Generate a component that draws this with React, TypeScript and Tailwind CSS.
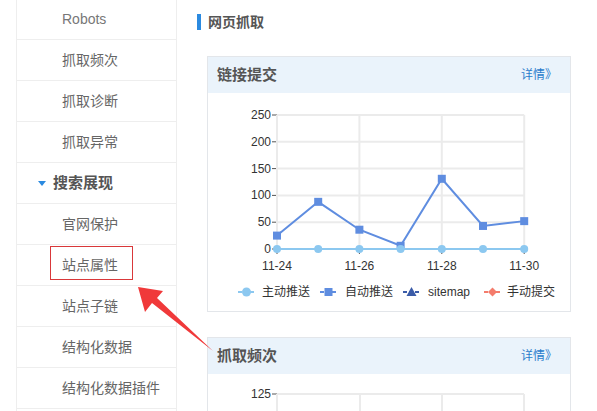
import React from 'react';

const font = { fontFamily: '"Liberation Sans", "Noto Sans CJK SC", sans-serif' };

interface NavItem {
    label: string;
    bold?: boolean;
    marked?: boolean;
}

const navItems: NavItem[] = [
    { label: 'Robots' },
    { label: '抓取频次' },
    { label: '抓取诊断' },
    { label: '抓取异常' },
    { label: '搜索展现', bold: true },
    { label: '官网保护' },
    { label: '站点属性', marked: true },
    { label: '站点子链' },
    { label: '结构化数据' },
    { label: '结构化数据插件' },
];

const submitData = [25, 88, 36, 6, 131, 43, 52];

// plot geometry in the card-body svg
const X0 = 69;
const XSTEP = 41.2;
const Y0 = 156;
const YTOP = 22;
const yOf = (v: number) => Y0 - ((Y0 - YTOP) * v) / 250;

const SubmitChart: React.FC = () => {
    const pts = submitData.map((v, i) => [X0 + i * XSTEP, yOf(v)]);
    return (
        <svg width="361" height="218" className="block" style={font}>
            {[0, 50, 100, 150, 200, 250].map((v) => (
                <g key={v}>
                    <line x1={X0} x2={X0 + 6 * XSTEP} y1={yOf(v)} y2={yOf(v)} stroke="#ebebeb" strokeWidth="2" />
                    <line x1={X0 - 5} x2={X0} y1={yOf(v)} y2={yOf(v)} stroke="#555" strokeWidth="1" />
                    <text x={X0 - 6} y={yOf(v) + 4} textAnchor="end" fontSize="12" fill="#333">{v}</text>
                </g>
            ))}
            {['11-24', '11-26', '11-28', '11-30'].map((d, i) => {
                const x = X0 + i * 2 * XSTEP;
                return (
                    <g key={d}>
                        <line x1={x} x2={x} y1={YTOP} y2={Y0} stroke="#ebebeb" strokeWidth="2" />
                        <line x1={x} x2={x} y1={Y0} y2={Y0 + 5} stroke="#555" strokeWidth="1" />
                        <text x={x} y={Y0 + 21} textAnchor="middle" fontSize="12" fill="#333">{d}</text>
                    </g>
                );
            })}
            <polyline points={pts.map((p) => p.join(',')).join(' ')} fill="none" stroke="#5f8de0" strokeWidth="2" />
            {pts.map((p, i) => (
                <rect key={i} x={p[0] - 4} y={p[1] - 4} width="8" height="8" fill="#5f8de0" />
            ))}
            <line x1={X0} x2={X0 + 6 * XSTEP} y1={Y0} y2={Y0} stroke="#8cc8f0" strokeWidth="2" />
            {submitData.map((_, i) => (
                <circle key={i} cx={X0 + i * XSTEP} cy={Y0} r="4" fill="#8cc8f0" />
            ))}
            {/* legend */}
            <g fontSize="12" fill="#333">
                <line x1="30" x2="47" y1="199" y2="199" stroke="#8cc8f0" strokeWidth="2" strokeDasharray="4 2" />
                <circle cx="38.5" cy="199" r="4.5" fill="#8cc8f0" />
                <text x="54" y="203">主动推送</text>
                <line x1="112" x2="129" y1="199" y2="199" stroke="#5f8de0" strokeWidth="2" strokeDasharray="4 2" />
                <rect x="116.5" y="195" width="8" height="8" fill="#5f8de0" />
                <text x="137" y="203">自动推送</text>
                <line x1="195" x2="212" y1="199" y2="199" stroke="#3b5ca8" strokeWidth="2" strokeDasharray="4 2" />
                <polygon points="203.5,194 208.5,203 198.5,203" fill="#3b5ca8" />
                <text x="220" y="203">sitemap</text>
                <line x1="276" x2="293" y1="199" y2="199" stroke="#f47c6c" strokeWidth="2" strokeDasharray="4 2" />
                <polygon points="284.5,194.5 289,199 284.5,203.5 280,199" fill="#f47c6c" />
                <text x="299" y="203">手动提交</text>
            </g>
        </svg>
    );
};

const FreqChart: React.FC = () => (
    <svg width="361" height="60" className="block" style={font}>
        <line x1={X0} x2={316} y1={20} y2={20} stroke="#ebebeb" strokeWidth="2" />
        <line x1={X0 - 5} x2={X0} y1={20} y2={20} stroke="#555" strokeWidth="1" />
        <text x={X0 - 6} y={24} textAnchor="end" fontSize="12" fill="#333">125</text>
        {[69, 152, 234, 316].map((x) => (
            <line key={x} x1={x} x2={x} y1={20} y2={60} stroke="#ebebeb" strokeWidth="2" />
        ))}
    </svg>
);

const Card: React.FC<{ title: string; children: React.ReactNode }> = ({ title, children }) => (
    <div className="border border-[#e3e6ea] bg-white">
        <div className="h-[36px] bg-[#eaf3fb] flex items-center justify-between pl-[9px] pr-[13px]">
            <span className="text-[15px] font-bold text-[#555]">{title}</span>
            <span className="text-[12px] text-[#2a7ccc]">详情》</span>
        </div>
        {children}
    </div>
);

const App: React.FC = () => {
    return (
        <div className="relative h-[411px] overflow-hidden bg-white flex" style={font}>
            {/* sidebar */}
            <div className="ml-4 w-[161px] border-x border-[#eeeeee] -mt-[1px] shrink-0">
                {navItems.map((item) => (
                    <div key={item.label} className="h-[41px] border-b border-[#eeeeee] flex items-center">
                        {item.bold ? (
                            <div className="flex items-center pl-[21px] gap-[7px]">
                                <span className="w-0 h-0 border-x-[4px] border-x-transparent border-t-[5px] border-t-[#2b8ae0]" />
                                <span className="text-[15px] font-bold text-[#555]">{item.label}</span>
                            </div>
                        ) : (
                            <span className={`relative pl-[45px] text-[14px] ${item.label === 'Robots' ? 'text-[#777]' : 'text-[#666]'}`}>
                                {item.label}
                                {item.marked && (
                                    <span className="absolute left-[33px] -top-[9px] w-[83px] h-[34px] border border-[#d9383a]" />
                                )}
                            </span>
                        )}
                    </div>
                ))}
            </div>

            {/* main */}
            <div className="ml-[20px] w-[374px]">
                <div className="mt-[14px] flex items-center h-[16px]">
                    <span className="w-[4px] h-[16px] bg-[#2b8ae0]" />
                    <span className="ml-[7px] text-[14px] font-bold text-[#555]">网页抓取</span>
                </div>
                <div className="mt-[26px] ml-[10px] w-[364px]">
                    <Card title="链接提交">
                        <SubmitChart />
                    </Card>
                    <div className="mt-[25px]">
                        <Card title="抓取频次">
                            <FreqChart />
                        </Card>
                    </div>
                </div>
            </div>

            {/* annotation arrow */}
            <svg className="absolute left-0 top-0 pointer-events-none" width="597" height="411">
                <polygon points="138,287 163,291 157,298 213,351 152,303 145,312" fill="#f0393a" />
            </svg>
        </div>
    );
};

export default App;
